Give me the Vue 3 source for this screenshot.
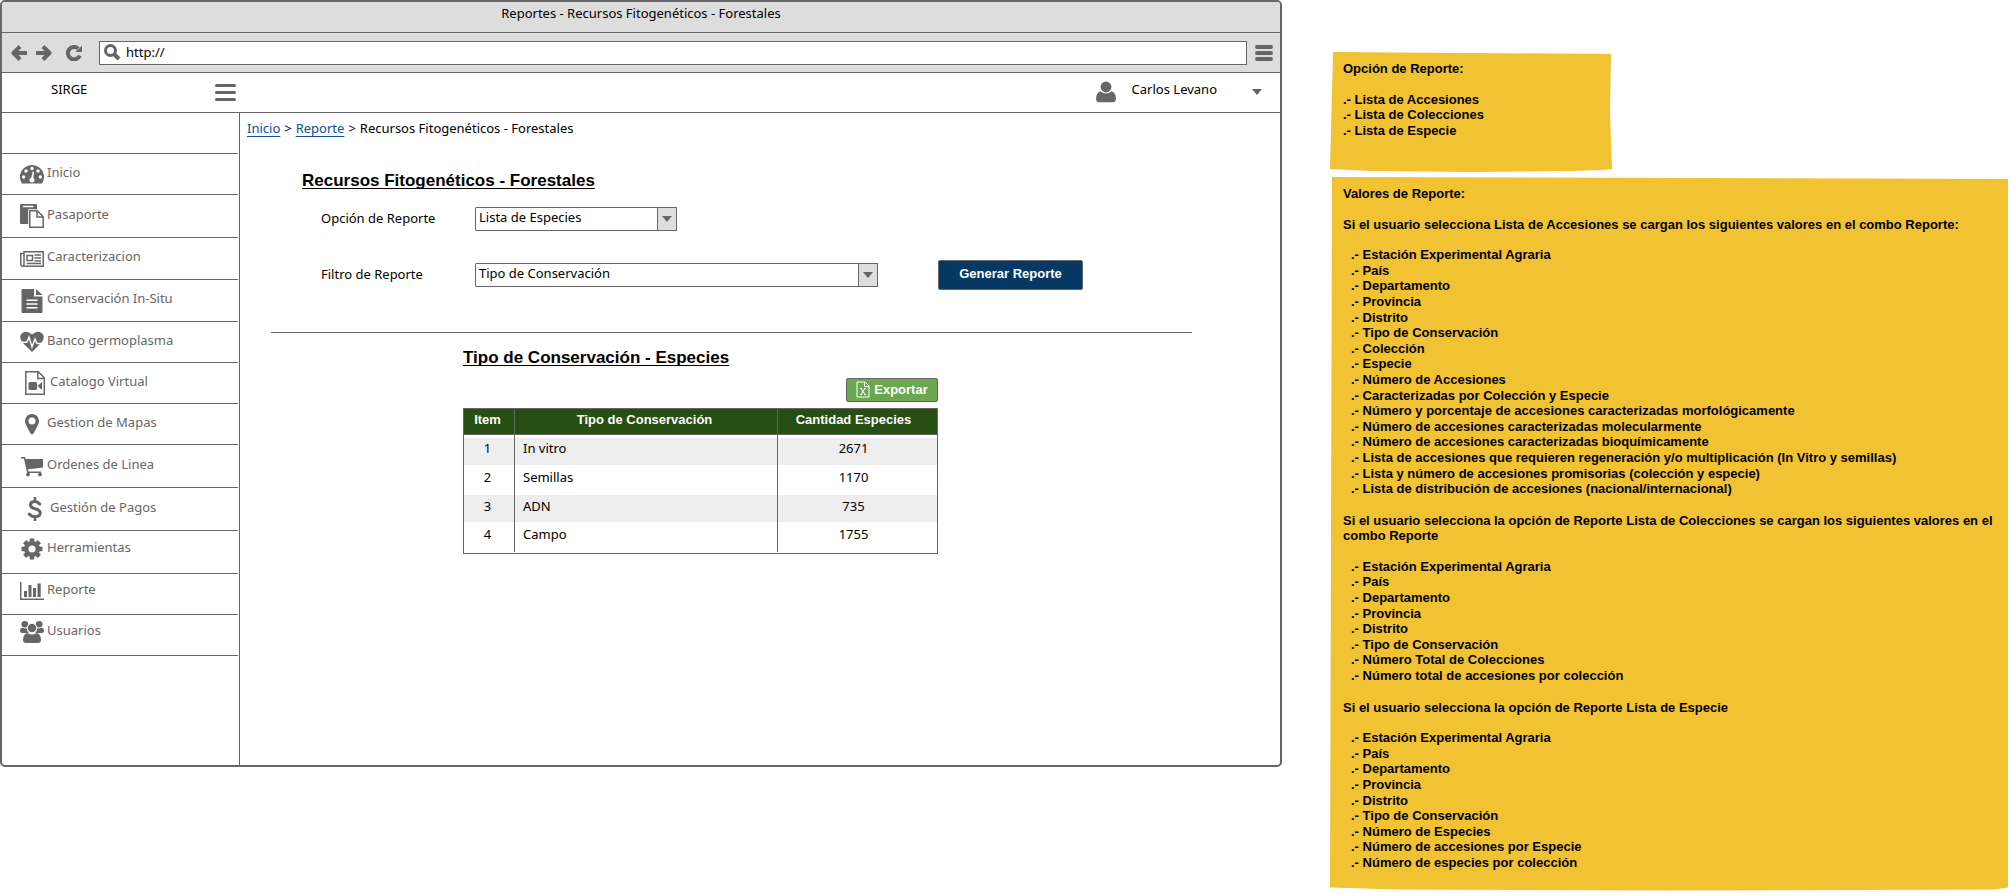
<script setup>
import { ref } from 'vue'

const menu = [
  { label: 'Inicio', icon: 'gauge', size: 'compact' },
  { label: 'Pasaporte', icon: 'paste', size: 'roomy' },
  { label: 'Caracterizacion', icon: 'news', size: 'normal' },
  { label: 'Conservación In-Situ', icon: 'file', size: 'normal' },
  { label: 'Banco germoplasma', icon: 'heart', size: 'compact' },
  { label: 'Catalogo Virtual', icon: 'video', size: 'compact', indent: true },
  { label: 'Gestion de Mapas', icon: 'pin', size: 'compact' },
  { label: 'Ordenes de Linea', icon: 'cart', size: 'roomy' },
  { label: 'Gestión de Pagos', icon: 'dollar', size: 'roomy', indent: true },
  { label: 'Herramientas', icon: 'gear', size: 'roomy', raised: true },
  { label: 'Reporte', icon: 'chart', size: 'compact', raised: true },
  { label: 'Usuarios', icon: 'users', size: 'compact', raised: true },
]

const url = ref('http://')
const option = ref('Lista de Especies')
const filter = ref('Tipo de Conservación')
const options = ['Lista de Accesiones', 'Lista de Colecciones', 'Lista de Especies']
const filters = ['Estación Experimental Agraria', 'País', 'Departamento', 'Provincia', 'Distrito', 'Tipo de Conservación']

const rows = [
  { name: 'In vitro', count: 2671 },
  { name: 'Semillas', count: 1170 },
  { name: 'ADN', count: 735 },
  { name: 'Campo', count: 1755 },
]

const places = ['Estación Experimental Agraria', 'País', 'Departamento', 'Provincia', 'Distrito', 'Tipo de Conservación']
const sections = [
  {
    intro: 'Si el usuario selecciona Lista de Accesiones se cargan los siguientes valores en el combo Reporte:',
    items: [
      ...places,
      'Colección',
      'Especie',
      'Número de Accesiones',
      'Caracterizadas por Colección y Especie',
      'Número y porcentaje de accesiones caracterizadas morfológicamente',
      'Número de accesiones caracterizadas molecularmente',
      'Número de accesiones caracterizadas bioquímicamente',
      'Lista de accesiones que requieren regeneración y/o multiplicación (In Vitro y semillas)',
      'Lista y número de accesiones promisorias (colección y especie)',
      'Lista de distribución de accesiones (nacional/internacional)',
    ],
  },
  {
    intro: 'Si el usuario selecciona la opción de Reporte Lista de Colecciones se cargan los siguientes valores en el combo Reporte',
    items: [...places, 'Número Total de Colecciones', 'Número total de accesiones por colección'],
  },
  {
    intro: 'Si el usuario selecciona la opción de Reporte Lista de Especie',
    items: [...places, 'Número de Especies', 'Número de accesiones por Especie', 'Número de especies por colección'],
  },
]
</script>

<template>
  <div class="page">
    <div class="window">
      <div class="titlebar">Reportes - Recursos Fitogenéticos - Forestales</div>
      <div class="toolbar">
        <button class="icon-btn" type="button" aria-label="Atrás">
          <svg width="16" height="16" viewBox="0 0 16 16"><path d="M9 1.500 2.500 8 9 14.500M3 8h13" class="line arrowline" /></svg>
        </button>
        <button class="icon-btn fwd" type="button" aria-label="Adelante">
          <svg width="16" height="16" viewBox="0 0 16 16"><path d="M7 1.500 13.500 8 7 14.500M13 8H0" class="line arrowline" /></svg>
        </button>
        <button class="icon-btn reload" type="button" aria-label="Recargar">
          <svg width="16" height="16" viewBox="0 0 16 16"><path d="M13.800 10.500A6.200 6.200 0 1 1 12.300 3.600" class="line mid" /><path d="M16 .7V7H9.500z" /></svg>
        </button>
        <div class="address">
          <svg width="17" height="17" viewBox="0 0 17 17"><circle cx="6.500" cy="6.500" r="5" class="line" /><path d="M10.500 10.500 15 15" class="line thick" /></svg>
          <input v-model="url" type="text" aria-label="Dirección" />
        </div>
        <button class="icon-btn" type="button" aria-label="Opciones">
          <svg width="18" height="16" viewBox="0 0 18 16"><path d="M2 2h14M2 8h14M2 14h14" class="line bars" /></svg>
        </button>
      </div>

      <header class="header">
        <span class="brand">SIRGE</span>
        <button class="icon-btn burger" type="button" aria-label="Menú">
          <svg width="21" height="18" viewBox="0 0 21 18"><path d="M1.500 2.500h18M1.500 9.500h18M1.500 16.500h18" class="line" /></svg>
        </button>
        <button class="user" type="button">
          <svg width="20" height="22" viewBox="0 0 20 22"><circle cx="10" cy="6" r="5.400" /><path d="M4.500 10.200Q10 14.600 15.500 10.200 20 11.500 20 18.500 19.800 21 17 21.300H3Q.2 21 0 18.500 0 11.500 4.500 10.200z" /></svg>
          <span>Carlos Levano</span>
          <svg class="caret" width="10" height="6" viewBox="0 0 10 6"><path d="M0 0h10L5 6z" /></svg>
        </button>
      </header>

      <div class="body">
        <nav class="sidebar">
          <ul>
            <li v-for="m in menu" :key="m.label">
              <a href="#" :class="[m.size, { indent: m.indent, raised: m.raised }]">
                <svg width="24" height="24" viewBox="0 0 24 24">
                  <template v-if="m.icon === 'gauge'">
                    <path d="M12 3A12 12 0 0 0 0 15q0 3.500 1.800 6.500h20.400Q24 18.500 24 15A12 12 0 0 0 12 3z" />
                    <g class="cut"><circle cx="3.600" cy="15" r="1.700" /><circle cx="6" cy="9" r="1.700" /><circle cx="12" cy="6.500" r="1.700" /><circle cx="18" cy="9" r="1.700" /><circle cx="20.400" cy="15" r="1.700" /><circle cx="12" cy="18" r="2.500" /><path d="M11 17l1.700-7.500 1.300.3L13 18z" /></g>
                  </template>
                  <template v-else-if="m.icon === 'paste'">
                    <path d="M1.200 0h15Q17 .2 17 1v5H9v14H1.200Q0 20 0 19V1.200Q0 0 1.200 0z" /><path class="cut" d="M3 1.700h10.500v1.600H3zM8.200 5.200H18l6 6.500V24H8.200z" />
                    <path class="outline" d="M9.800 6.800h7.500l5.900 6v10.400H9.800zM17 7v6h6" />
                  </template>
                  <template v-else-if="m.icon === 'news'">
                    <path class="outline" d="M4 4.800h19.200v14.400H2.500Q.8 19 .8 17.500V6.500H4zM4 6v11.500Q4 19 2.500 19.200" />
                    <path class="outline" d="M7 8.500h5.500v5H7zM14.500 8h6.500M14.500 11h6.500M14.500 14h6.500M6.500 16.500h14.500" />
                  </template>
                  <template v-else-if="m.icon === 'file'">
                    <path d="M2.500 0H14v7.500h8.500V23q0 1-1 1h-19q-1 0-1-1V1q0-1 1-1zM16 0l6.500 6H16z" /><path class="cut" d="M6.500 10.500h11v1.500h-11zM6.500 14.300h11v1.500h-11zM6.500 18h11v1.500h-11z" />
                  </template>
                  <template v-else-if="m.icon === 'heart'">
                    <path d="M12 22 2.500 12.500Q-1.500 7 1.500 3.800 6-.5 12 4.500 18-.5 22.500 3.800 25.500 7 21.500 12.500z" /><path class="cutline" d="M0 12.200h6.800L9 7l3 10 3-8 2 4.500h7" />
                  </template>
                  <template v-else-if="m.icon === 'video'">
                    <path class="outline" d="M2.800.8h12.500l6 6v16.400H2.800zM14.800 1v6.500h6.500" /><rect x="5.500" y="11" width="8.500" height="8" rx="1.500" /><path d="M14.500 15 19 11v8z" />
                  </template>
                  <path v-else-if="m.icon === 'pin'" fill-rule="evenodd" d="M12 2a7 7 0 0 0-7 7q0 2 .8 3.500L10.500 21.500q1.500 1.500 3 0L18.200 12.500Q19 11 19 9a7 7 0 0 0-7-7zm0 3.500a3.500 3.500 0 1 1 0 7 3.500 3.500 0 0 1 0-7z" />
                  <template v-else-if="m.icon === 'cart'">
                    <path d="M5 5h18v8.500L7 15.500z" /><path class="outline" d="M1 3.800h3.500L7.800 18.200H21" /><circle cx="8" cy="20.500" r="1.900" /><circle cx="20" cy="20.500" r="1.900" />
                  </template>
                  <template v-else-if="m.icon === 'dollar'">
                    <path class="line" d="M16.700 7Q14.500 4.500 11.500 4.600 7.500 4.800 7.500 8q0 2.700 4.500 3.800 5.200 1.200 5.200 4.200 0 3.600-5 3.700-3.500 0-6-2.700" /><path d="M10.700 0h2.600v4.500h-2.600zM10.700 19h2.600v5h-2.600z" />
                  </template>
                  <template v-else-if="m.icon === 'gear'">
                    <path class="teeth" d="M12 1.500v21M1.500 12h21M4.600 4.600l14.800 14.800M19.400 4.600 4.600 19.400" /><circle cx="12" cy="12" r="8" /><circle class="cut" cx="12" cy="12" r="3.500" />
                  </template>
                  <path v-else-if="m.icon === 'chart'" d="M0 3h1.500v16.500H24V21H0zM4 12h3v6H4zM8.500 6h3v12h-3zM13 9h3v9h-3zM17.500 4.500h3.200V18h-3.200z" />
                  <template v-else>
                    <circle cx="4.800" cy="4.200" r="3.300" /><circle cx="19.200" cy="4.200" r="3.300" /><path d="M2 7.500q3 1.500 5 .5 0 3 1.500 5H2Q0 13 0 11.200 0 8 2 7.500zM22 7.500q-3 1.500-5 .5 0 3-1.500 5H22q2 0 2-1.800Q24 8 22 7.500z" />
                    <circle class="halo" cx="12" cy="8" r="4.700" /><path d="M7.500 13Q12 16 16.500 13 21 14 21 20 20.800 23 18 23H6Q3.200 23 3 20 3 14 7.500 13z" />
                  </template>
                </svg>
                <span>{{ m.label }}</span>
              </a>
            </li>
          </ul>
        </nav>

        <main class="main">
          <nav class="crumbs">
            <a href="#">Inicio</a><span>&gt;</span><a href="#">Reporte</a><span>&gt;</span>Recursos Fitogenéticos - Forestales
          </nav>
          <h1>Recursos Fitogenéticos - Forestales</h1>
          <form @submit.prevent>
            <div class="field">
              <label for="option">Opción de Reporte</label>
              <div class="select short">
                <select id="option" v-model="option"><option v-for="o in options" :key="o">{{ o }}</option></select>
                <span class="arrow"><svg width="10" height="6" viewBox="0 0 10 6"><path d="M0 0h10L5 6z" /></svg></span>
              </div>
            </div>
            <div class="field second">
              <label for="filter">Filtro de Reporte</label>
              <div class="select long">
                <select id="filter" v-model="filter"><option v-for="o in filters" :key="o">{{ o }}</option></select>
                <span class="arrow"><svg width="10" height="6" viewBox="0 0 10 6"><path d="M0 0h10L5 6z" /></svg></span>
              </div>
              <button class="primary" type="submit">Generar Reporte</button>
            </div>
          </form>
          <hr />
          <section class="report">
            <h2>Tipo de Conservación - Especies</h2>
            <button class="export" type="button">
              <svg width="14" height="17" viewBox="0 0 14 17"><path d="M1 1h8l4 4v11H1zM8.500 1v4.500H13" /><path d="M4 7.500h2M8 7.500h2M4 13.500h2M8 13.500h2M5 7.500l4 6M9 7.500l-4 6" /></svg>
              Exportar
            </button>
            <table>
              <thead>
                <tr><th class="item">Item</th><th>Tipo de Conservación</th><th class="count">Cantidad Especies</th></tr>
              </thead>
              <tbody>
                <tr v-for="(r, i) in rows" :key="r.name">
                  <td>{{ i + 1 }}</td><td class="name">{{ r.name }}</td><td>{{ r.count }}</td>
                </tr>
              </tbody>
            </table>
          </section>
        </main>
      </div>
    </div>

    <aside class="notes">
      <section class="note small">
        <p>Opción de Reporte:</p>
        <ul>
          <li>Lista de Accesiones</li>
          <li>Lista de Colecciones</li>
          <li>Lista de Especie</li>
        </ul>
      </section>
      <section class="note large">
        <p>Valores de Reporte:</p>
        <template v-for="s in sections" :key="s.intro">
          <p>{{ s.intro }}</p>
          <ul class="inset"><li v-for="t in s.items" :key="t">{{ t }}</li></ul>
        </template>
      </section>
    </aside>
  </div>
</template>

<style>
body { background: #fff; }
</style>

<style scoped>
.page {
  display: grid;
  grid-template-columns: minmax(0, 1282fr) minmax(0, 678fr);
  column-gap: 48px;
  align-items: start;
  padding-right: 2px;
  font: 13px/1.2 "Noto Sans", "Open Sans", sans-serif;
  color: #000;
}
.page * { box-sizing: border-box; }
button, input, select { font: inherit; color: inherit; margin: 0; padding: 0; border: 0; background: none; }
svg { display: block; flex: none; fill: #666; }
ul { list-style: none; margin: 0; padding: 0; }
.line { fill: none; stroke: #666; stroke-width: 3; stroke-linecap: round; }
.mid { stroke-width: 4; stroke-linecap: butt; }
.thick { stroke-width: 4; stroke-linecap: butt; }
.arrowline { stroke-width: 4; stroke-linecap: butt; stroke-linejoin: round; }
.bars { stroke-width: 4; }
.cut { fill: #fff; }
.halo { stroke: #fff; }
.cutline { fill: none; stroke: #fff; stroke-width: 1.400; }
.outline { fill: none; stroke: #666; stroke-width: 1.500; }
.teeth { fill: none; stroke: #666; stroke-width: 4.500; }

.window { border: 2px solid #666; border-radius: 5px; overflow: hidden; }
.titlebar { background: #ddd; height: 31px; padding-top: 4px; text-align: center; border-bottom: 1px solid #666; }
.toolbar { display: flex; align-items: center; height: 40px; padding: 0 7px 0 9px; background: #ddd; border-bottom: 1px solid #666; }
.fwd { margin-left: 9px; }
.reload { margin: 0 17px 0 14px; }
.address { flex: 1; display: flex; align-items: center; gap: 5px; height: 24px; margin-right: 8px; padding-left: 4px; background: #fff; border: 1px solid #666; }
.address input { flex: 1; min-width: 0; outline: 0; }
.header { display: flex; align-items: center; height: 40px; padding: 0 18px 2px 49px; border-bottom: 1px solid #666; }
.brand { width: 164px; padding-bottom: 3px; }
.burger { margin-right: auto; }
.user { display: flex; align-items: center; }
.user span { margin: 0 35px 0 16px; padding-bottom: 3px; }

.body { display: flex; }
.sidebar { flex: none; width: 238px; padding: 40px 1px 109px 0; border-right: 1px solid #666; }
.sidebar ul { border-top: 1px solid #666; }
.sidebar a { display: flex; align-items: center; gap: 3px; height: 42px; padding-left: 18px; color: #666; text-decoration: none; border-bottom: 1px solid #666; }
.sidebar a.compact { height: 41px; }
.sidebar a.roomy { height: 43px; }
.sidebar a.indent { padding-left: 21px; }
.sidebar a.raised { padding-bottom: 6px; }
.sidebar a span { padding-bottom: 3px; }

.main { flex: 1; min-width: 0; padding: 8px 0 40px; }
.crumbs { display: flex; padding-left: 7px; }
.crumbs a { color: #0d4f92; text-underline-offset: 3px; text-decoration-skip-ink: none; }
.crumbs span { margin: 0 4px; }
h1, h2 { margin: 0; font: bold 17px/20px "Liberation Sans", Arial, sans-serif; text-decoration: underline 1px; text-underline-offset: 2px; text-decoration-skip-ink: none; }
h1 { margin: 34px 0 16px 62px; }
form { padding-left: 81px; }
.field { display: flex; align-items: center; }
.second { margin-top: 29px; }
label { flex: none; width: 154px; }
.select { position: relative; height: 24px; }
.short { width: 202px; }
.long { width: 403px; }
select { appearance: none; width: 100%; height: 100%; padding: 0 22px 1px 3px; background: #fff; border: 1px solid #666; border-radius: 1px; }
.arrow { position: absolute; top: 0; right: 0; display: grid; place-items: center; width: 20px; height: 24px; background: #ddd; border: 1px solid #666; pointer-events: none; }
.primary { width: 145px; height: 30px; margin-left: 60px; padding-bottom: 2px; background: #073763; border: 1px solid #666; border-radius: 2px; color: #fff; font: bold 13px/1.2 "Liberation Sans", Arial, sans-serif; }
hr { height: 1px; margin: 42px 88px 15px 31px; border: 0; background: #666; }
.report { display: flex; flex-direction: column; width: 475px; margin-left: 223px; }
.export { align-self: flex-end; display: flex; align-items: center; justify-content: center; gap: 4px; width: 92px; height: 24px; margin: 10px 0 6px; background: #6aa84f; border: 1px solid #666; border-radius: 2px; color: #fff; font: bold 13px/1.2 "Liberation Sans", Arial, sans-serif; }
.export svg path { fill: none; stroke: #fff; }
table { width: 100%; padding-bottom: 1px; border: 1px solid #666; border-collapse: separate; border-spacing: 0; table-layout: fixed; text-align: center; }
th { height: 26px; padding: 0 3px 2px 0; background: #274e13; border-bottom: 1px solid #666; color: #fff; font: bold 13px/1.2 "Liberation Sans", Arial, sans-serif; }
th.item { width: 51px; }
th.count { width: 159px; padding-right: 8px; }
th:not(:last-child), td:not(:last-child) { border-right: 1px solid #666; }
td { height: 30px; padding: 0 3px 4px 0; }
td:last-child { padding-right: 8px; }
tr:nth-child(odd) td { height: 27px; padding-bottom: 2px; background: #eee; }
tbody tr:first-child td { height: 30px; padding-top: 3px; padding-bottom: 4px; box-shadow: inset 0 3px #fff; }
td.name { text-align: left; text-indent: 8px; }

.notes { padding-top: 52px; font: bold 13px/1.2 "Liberation Sans", Arial, sans-serif; }
.note { padding: 9px 12px 20px 13px; background: #f1c232; }
.note p { margin: 0 0 15px; }
.note ul + p { margin-top: 16px; }
.note li::before { content: ".- "; white-space: pre; }
.inset { padding-left: 8px; }
.small { width: 282px; min-height: 120px; clip-path: polygon(3px 0, 281px 2px, 280px 50%, 100% 117px, 97% 118px, 85% 119px, 50% 100%, 15% 119px, 0 117px); }
.large { margin-top: 5px; clip-path: polygon(2px 0, 100% 2px, 100% 50%, 100% calc(100% - 3px), 98% calc(100% - 1px), 50% 100%, 10% calc(100% - 1px), 0 calc(100% - 3px)); }
</style>
